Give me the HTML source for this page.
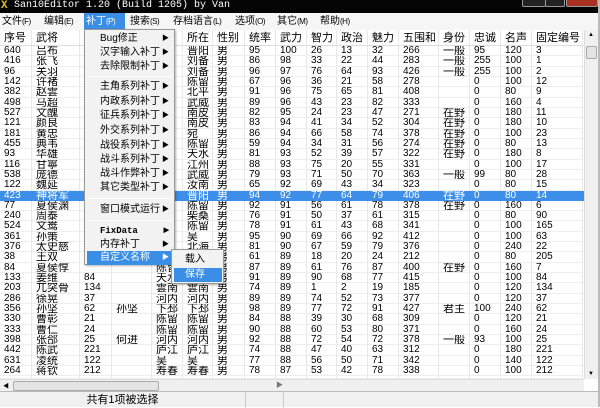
<!DOCTYPE html>
<html><head><meta charset="utf-8"><style>
*{margin:0;padding:0;box-sizing:border-box}
body{width:600px;height:407px;overflow:hidden;background:#fff;position:relative;font-family:"Liberation Sans","Noto Sans CJK SC",sans-serif;font-size:10px;color:#000}
.tb{position:absolute;left:0;top:0;width:600px;height:13px;background:#050505;color:#fff;font-family:"Liberation Mono","Noto Sans CJK SC",monospace;font-size:10px;line-height:12px;white-space:nowrap}
.tb .x{position:absolute;left:1px;top:0;color:#e8c020;font-weight:bold;font-size:11px}
.tb .t{position:absolute;left:14px;top:0}
.tbb{position:absolute;top:-2px;height:9px;border:1px solid #999;border-radius:2px;background:#222}
.mb{position:absolute;left:0;top:13px;width:600px;height:17px;background:#f6f6f6;font-size:10px;line-height:17px;white-space:nowrap}
.mb span{position:absolute;top:0}
.mb small{font-size:8px;letter-spacing:-0.5px}
.mb .on{background:#3a8ee6;color:#fff;height:17px;padding:0 2px;width:41px}
.hd{position:absolute;left:0;top:30px;width:584px;height:16px;background:#fff;border-bottom:1px solid #ddd;font-size:11px;line-height:16px}
.row,.hd{display:flex;white-space:nowrap}
.row{position:absolute;left:0;width:584px;height:10.32px;line-height:10px}
.row span,.hd span{display:block;overflow:hidden;padding-left:4px;border-right:1px solid #e8e8e8;height:100%}
.row span{border-bottom:1px solid #eee}
.row span:nth-child(2),.row span:nth-child(4),.row span:nth-child(5),.row span:nth-child(6),.row span:nth-child(7),.row span:nth-child(14){font-size:11px}
span:nth-child(1){width:32px}span:nth-child(2){width:48px}span:nth-child(3){width:32px}span:nth-child(4){width:40px}span:nth-child(5){width:31px}span:nth-child(6){width:30px}span:nth-child(7){width:32px}span:nth-child(8){width:31px}span:nth-child(9){width:31px}span:nth-child(10){width:30px}span:nth-child(11){width:31px}span:nth-child(12){width:31px}span:nth-child(13){width:40px}span:nth-child(14){width:31px}span:nth-child(15){width:31px}span:nth-child(16){width:31px}span:nth-child(17){width:51px}
.sel{background:#3d8ee8;color:#fff}
.sel span{border-color:#3d8ee8}
.vs{position:absolute;left:584px;top:30px;width:14px;height:349px;background:#f0f0f0;border-left:1px solid #ddd}
.hs{position:absolute;left:0;top:379px;width:584px;height:12px;background:#f0f0f0;border-top:1px solid #ddd}
.thumb{position:absolute;background:#e4e4e4;border:1px solid #aaa;border-radius:2px}
.st{position:absolute;left:0;top:391px;width:600px;height:16px;background:#f0f0f0;border-top:1px solid #bbb;font-size:11px;line-height:16px}
.rb{position:absolute;right:0;top:0;width:2px;height:407px;background:#bbb}
.menu{position:absolute;left:84px;top:29px;width:91px;height:236px;background:#f2f2f2;border:1px solid #999;box-shadow:1px 1px 2px rgba(0,0,0,.3);font-size:10px;white-space:nowrap}
.mi{position:absolute;left:2px;width:86px;height:14px;line-height:14px;padding-left:13px}
.mi i{position:absolute;right:4px;top:0;font-style:normal;font-size:7px}
.sep{position:absolute;left:3px;width:84px;height:1px;background:#bbb;border-bottom:1px solid #fff}
.hi{background:#3a8ee6;color:#fff}
.sub{position:absolute;left:171px;top:249px;width:53px;height:35px;background:#f2f2f2;border:1px solid #999;box-shadow:1px 1px 2px rgba(0,0,0,.3);font-size:10px;white-space:nowrap}
</style></head><body>
<div class="tb"><span class="x">X</span><span class="t">San10Editor 1.20 (Build 1205) by Van</span>
<div class="tbb" style="left:522px;width:24px"></div><div class="tbb" style="left:545px;width:20px"></div><div class="tbb" style="left:566px;width:32px;background:#a83020"></div></div>
<div class="mb"><span style="left:2px">文件<small>(F)</small></span><span style="left:44px">编辑<small>(E)</small></span><span class="on" style="left:84px">补丁<small>(P)</small></span><span style="left:130px">搜索<small>(S)</small></span><span style="left:173px">存档语言<small>(L)</small></span><span style="left:235px">选项<small>(O)</small></span><span style="left:277px">其它<small>(M)</small></span><span style="left:320px">帮助<small>(H)</small></span></div>
<div class="hd"><span>序号</span><span>武将</span><span></span><span></span><span></span><span>所在</span><span>性别</span><span>统率</span><span>武力</span><span>智力</span><span>政治</span><span>魅力</span><span>五围和</span><span>身份</span><span>忠诚</span><span>名声</span><span>固定编号</span></div>
<div class="row" style="top:46px"><span>640</span><span>吕布</span><span></span><span></span><span></span><span>晋阳</span><span>男</span><span>95</span><span>100</span><span>26</span><span>13</span><span>32</span><span>266</span><span>一般</span><span>95</span><span>120</span><span>3</span></div>
<div class="row" style="top:56.3px"><span>416</span><span>张飞</span><span></span><span></span><span></span><span>刘备</span><span>男</span><span>86</span><span>98</span><span>33</span><span>22</span><span>44</span><span>283</span><span>一般</span><span>255</span><span>100</span><span>1</span></div>
<div class="row" style="top:66.6px"><span>96</span><span>关羽</span><span></span><span></span><span></span><span>刘备</span><span>男</span><span>96</span><span>97</span><span>76</span><span>64</span><span>93</span><span>426</span><span>一般</span><span>255</span><span>100</span><span>2</span></div>
<div class="row" style="top:77px"><span>142</span><span>许褚</span><span></span><span></span><span></span><span>陈留</span><span>男</span><span>67</span><span>96</span><span>36</span><span>21</span><span>58</span><span>278</span><span></span><span>0</span><span>100</span><span>12</span></div>
<div class="row" style="top:87.3px"><span>382</span><span>赵雲</span><span></span><span></span><span></span><span>北平</span><span>男</span><span>91</span><span>96</span><span>75</span><span>65</span><span>81</span><span>408</span><span></span><span>0</span><span>80</span><span>9</span></div>
<div class="row" style="top:97.6px"><span>498</span><span>马超</span><span></span><span></span><span></span><span>武威</span><span>男</span><span>89</span><span>96</span><span>43</span><span>23</span><span>82</span><span>333</span><span></span><span>0</span><span>160</span><span>4</span></div>
<div class="row" style="top:107.9px"><span>527</span><span>文醜</span><span></span><span></span><span></span><span>南皮</span><span>男</span><span>82</span><span>95</span><span>24</span><span>23</span><span>47</span><span>271</span><span>在野</span><span>0</span><span>180</span><span>11</span></div>
<div class="row" style="top:118.2px"><span>121</span><span>颜良</span><span></span><span></span><span></span><span>南皮</span><span>男</span><span>83</span><span>94</span><span>41</span><span>34</span><span>52</span><span>304</span><span>在野</span><span>0</span><span>180</span><span>10</span></div>
<div class="row" style="top:128.6px"><span>181</span><span>黄忠</span><span></span><span></span><span></span><span>宛</span><span>男</span><span>86</span><span>94</span><span>66</span><span>58</span><span>74</span><span>378</span><span>在野</span><span>0</span><span>100</span><span>23</span></div>
<div class="row" style="top:138.9px"><span>455</span><span>典韦</span><span></span><span></span><span></span><span>陈留</span><span>男</span><span>59</span><span>94</span><span>34</span><span>31</span><span>56</span><span>274</span><span>在野</span><span>0</span><span>80</span><span>13</span></div>
<div class="row" style="top:149.2px"><span>93</span><span>华雄</span><span></span><span></span><span></span><span>天水</span><span>男</span><span>81</span><span>93</span><span>52</span><span>39</span><span>57</span><span>322</span><span>在野</span><span>0</span><span>180</span><span>8</span></div>
<div class="row" style="top:159.5px"><span>116</span><span>甘寧</span><span></span><span></span><span></span><span>江州</span><span>男</span><span>88</span><span>93</span><span>75</span><span>20</span><span>55</span><span>331</span><span></span><span>0</span><span>100</span><span>17</span></div>
<div class="row" style="top:169.8px"><span>538</span><span>庞德</span><span></span><span></span><span></span><span>武威</span><span>男</span><span>79</span><span>93</span><span>71</span><span>50</span><span>70</span><span>363</span><span>一般</span><span>99</span><span>80</span><span>28</span></div>
<div class="row" style="top:180.2px"><span>122</span><span>魏延</span><span></span><span></span><span></span><span>汝南</span><span>男</span><span>65</span><span>92</span><span>69</span><span>43</span><span>34</span><span>323</span><span></span><span>0</span><span>80</span><span>15</span></div>
<div class="row sel" style="top:190.5px"><span>423</span><span>神将军</span><span></span><span></span><span></span><span>晋阳</span><span>男</span><span>94</span><span>92</span><span>77</span><span>64</span><span>79</span><span>406</span><span>在野</span><span>0</span><span>80</span><span>14</span></div>
<div class="row" style="top:200.8px"><span>77</span><span>夏侯渊</span><span></span><span></span><span></span><span>陈留</span><span>男</span><span>92</span><span>91</span><span>56</span><span>61</span><span>78</span><span>378</span><span>在野</span><span>0</span><span>160</span><span>6</span></div>
<div class="row" style="top:211.1px"><span>240</span><span>周泰</span><span></span><span></span><span></span><span>柴桑</span><span>男</span><span>76</span><span>91</span><span>50</span><span>37</span><span>61</span><span>315</span><span></span><span>0</span><span>80</span><span>90</span></div>
<div class="row" style="top:221.4px"><span>524</span><span>文鸯</span><span></span><span></span><span></span><span>陈留</span><span>男</span><span>78</span><span>91</span><span>61</span><span>43</span><span>68</span><span>341</span><span></span><span>0</span><span>100</span><span>165</span></div>
<div class="row" style="top:231.8px"><span>361</span><span>孙策</span><span></span><span></span><span></span><span>吴</span><span>男</span><span>95</span><span>90</span><span>69</span><span>66</span><span>92</span><span>412</span><span></span><span>0</span><span>100</span><span>63</span></div>
<div class="row" style="top:242.1px"><span>376</span><span>太史慈</span><span></span><span></span><span></span><span>北海</span><span>男</span><span>81</span><span>90</span><span>67</span><span>59</span><span>79</span><span>376</span><span></span><span>0</span><span>240</span><span>22</span></div>
<div class="row" style="top:252.4px"><span>38</span><span>王双</span><span></span><span></span><span></span><span></span><span>男</span><span>61</span><span>89</span><span>18</span><span>20</span><span>24</span><span>212</span><span></span><span>0</span><span>80</span><span>205</span></div>
<div class="row" style="top:262.7px"><span>84</span><span>夏侯惇</span><span></span><span></span><span>陈留</span><span></span><span>男</span><span>87</span><span>89</span><span>61</span><span>76</span><span>87</span><span>400</span><span>在野</span><span>0</span><span>160</span><span>7</span></div>
<div class="row" style="top:273px"><span>133</span><span>姜维</span><span>84</span><span></span><span>天水</span><span>天水</span><span>男</span><span>91</span><span>89</span><span>90</span><span>68</span><span>77</span><span>415</span><span></span><span>0</span><span>100</span><span>84</span></div>
<div class="row" style="top:283.4px"><span>203</span><span>兀突骨</span><span>134</span><span></span><span>雲南</span><span>雲南</span><span>男</span><span>74</span><span>89</span><span>1</span><span>2</span><span>19</span><span>185</span><span></span><span>0</span><span>120</span><span>134</span></div>
<div class="row" style="top:293.7px"><span>286</span><span>徐晃</span><span>37</span><span></span><span>河内</span><span>河内</span><span>男</span><span>89</span><span>89</span><span>74</span><span>52</span><span>73</span><span>377</span><span></span><span>0</span><span>120</span><span>37</span></div>
<div class="row" style="top:304px"><span>356</span><span>孙坚</span><span>62</span><span>孙坚</span><span>下邳</span><span>下邳</span><span>男</span><span>98</span><span>89</span><span>77</span><span>72</span><span>91</span><span>427</span><span>君主</span><span>100</span><span>240</span><span>62</span></div>
<div class="row" style="top:314.3px"><span>330</span><span>曹彰</span><span>21</span><span></span><span>陈留</span><span>陈留</span><span>男</span><span>84</span><span>88</span><span>39</span><span>30</span><span>68</span><span>309</span><span></span><span>0</span><span>120</span><span>21</span></div>
<div class="row" style="top:324.6px"><span>333</span><span>曹仁</span><span>24</span><span></span><span>陈留</span><span>陈留</span><span>男</span><span>90</span><span>88</span><span>60</span><span>53</span><span>80</span><span>371</span><span></span><span>0</span><span>160</span><span>24</span></div>
<div class="row" style="top:335px"><span>398</span><span>张郃</span><span>25</span><span>何进</span><span>河内</span><span>河内</span><span>男</span><span>92</span><span>88</span><span>72</span><span>54</span><span>72</span><span>378</span><span>一般</span><span>93</span><span>100</span><span>25</span></div>
<div class="row" style="top:345.3px"><span>442</span><span>陈武</span><span>221</span><span></span><span>庐江</span><span>庐江</span><span>男</span><span>74</span><span>88</span><span>47</span><span>40</span><span>63</span><span>312</span><span></span><span>0</span><span>180</span><span>221</span></div>
<div class="row" style="top:355.6px"><span>631</span><span>凌统</span><span>122</span><span></span><span>吴</span><span>吴</span><span>男</span><span>77</span><span>88</span><span>56</span><span>50</span><span>71</span><span>342</span><span></span><span>0</span><span>140</span><span>122</span></div>
<div class="row" style="top:365.9px"><span>264</span><span>蒋钦</span><span>212</span><span></span><span>寿春</span><span>寿春</span><span>男</span><span>78</span><span>87</span><span>53</span><span>42</span><span>78</span><span>338</span><span></span><span>0</span><span>100</span><span>212</span></div>
<div class="row" style="top:376.2px;height:3px;overflow:hidden"><span></span><span></span><span></span><span></span><span></span><span></span><span></span><span></span><span></span><span></span><span></span><span></span><span></span><span></span><span></span><span></span><span></span></div>
<div class="vs"><div style="position:absolute;left:3px;top:2px;font-size:6px">▲</div><div class="thumb" style="left:1px;top:16px;width:11px;height:13px"></div><div style="position:absolute;left:3px;bottom:2px;font-size:6px">▼</div></div>
<div class="hs"><div style="position:absolute;left:3px;top:1px;font-size:6px">◀</div><div class="thumb" style="left:13px;top:1px;width:146px;height:10px"></div><div style="position:absolute;left:276px;top:0px;font-size:7px;color:#777">▶</div></div>
<div class="st"><div style="position:absolute;left:0;top:0;width:246px;height:16px;border-right:1px solid #ccc;text-align:center">共有1项被选择</div><div style="position:absolute;left:246px;top:0;width:38px;height:16px;border-right:1px solid #ccc"></div></div>
<div class="rb"></div>
<div class="menu">
<div class="mi" style="top:2px">Bug修正<i>▶</i></div>
<div class="mi" style="top:16px">汉字输入补丁<i>▶</i></div>
<div class="mi" style="top:30px">去除限制补丁<i>▶</i></div>
<div class="sep" style="top:46px"></div>
<div class="mi" style="top:50px">主角系列补丁<i>▶</i></div>
<div class="mi" style="top:65px">内政系列补丁<i>▶</i></div>
<div class="mi" style="top:79px">征兵系列补丁<i>▶</i></div>
<div class="mi" style="top:94px">外交系列补丁<i>▶</i></div>
<div class="mi" style="top:109px">战役系列补丁<i>▶</i></div>
<div class="mi" style="top:123px">战斗系列补丁<i>▶</i></div>
<div class="mi" style="top:137px">战斗作弊补丁<i>▶</i></div>
<div class="mi" style="top:151px">其它类型补丁<i>▶</i></div>
<div class="sep" style="top:168px"></div>
<div class="mi" style="top:173px">窗口模式运行<i>▶</i></div>
<div class="sep" style="top:190px"></div>
<div class="mi" style="top:194px;font-size:9px;font-family:'Liberation Mono',monospace;font-weight:bold">FixData<i>▶</i></div>
<div class="mi" style="top:208px">内存补丁<i>▶</i></div>
<div class="mi hi" style="top:221px">自定义名称<i>▶</i></div>
</div>
<div class="sub">
<div class="mi" style="left:2px;top:3px;width:48px;padding-left:11px">载入</div>
<div class="mi hi" style="left:2px;top:18px;width:48px;padding-left:11px">保存</div>
</div>
</body></html>
